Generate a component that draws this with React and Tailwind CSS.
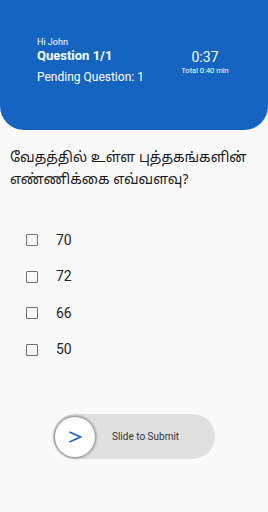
export default function App() {
  const options = ["70", "72", "66", "50"];
  return (
    <div className="w-[268px] h-[512px] bg-[#fafafa] flex flex-col" style={{ fontFamily: "Roboto, 'Noto Sans', sans-serif" }}>
      <div className="h-[130px] bg-[#1565c0] rounded-b-[24px] flex items-start pl-[37px] pr-[37px] pt-[36px] text-white">
        <div className="flex flex-col flex-1">
          <div className="text-[9px] leading-[12px]">Hi John</div>
          <div className="text-[13px] font-bold leading-[16px]">Question 1/1</div>
          <div className="text-[12px] leading-[14px] mt-[6px]">Pending Question: 1</div>
        </div>
        <div className="flex flex-col items-center pt-[13px] w-[52px]">
          <div className="text-[14px] leading-[16px]">0:37</div>
          <div className="text-[7.5px] leading-[9px] mt-[1px] whitespace-nowrap">Total 0:40 min</div>
        </div>
      </div>
      <div className="px-[10px] pt-[18px] text-[14px] leading-[22px] text-[#1a1a1a]" style={{ fontFamily: "'Noto Sans Tamil', 'Noto Serif Tamil', 'Lohit Tamil', 'Noto Sans', sans-serif" }}>
        வேதத்தில் உள்ள புத்தகங்களின் எண்ணிக்கை எவ்வளவு?
      </div>
      <div className="flex flex-col pl-[26px] mt-[42px] gap-[24.5px]">
        {options.map((o) => (
          <div key={o} className="flex items-center h-[12px]">
            <div className="w-[12px] h-[12px] border-[1.5px] border-[#6f6f6f] rounded-[1px]"></div>
            <div className="ml-[18px] text-[14px] text-[#222]">{o}</div>
          </div>
        ))}
      </div>
      <div className="flex-1"></div>
      <div className="flex justify-center mb-[53px]">
        <div className="w-[162px] h-[45px] rounded-full bg-[#e0e0e0] flex items-center pl-[2px]">
          <div className="w-[40px] h-[40px] rounded-full bg-white shadow-[0_0_3px_1px_rgba(0,0,0,0.45)] flex items-center justify-center">
            <svg width="14" height="12" viewBox="0 0 14 12">
              <polyline points="1.5,1 12.5,6 1.5,11" fill="none" stroke="#1565c0" strokeWidth="1.6" />
            </svg>
          </div>
          <div className="ml-[17px] text-[10px] text-[#333]">Slide to Submit</div>
        </div>
      </div>
    </div>
  );
}
